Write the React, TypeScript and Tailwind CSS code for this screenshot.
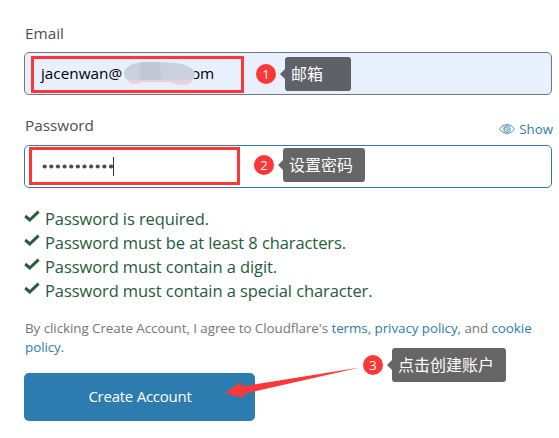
import type { ReactNode } from "react";

const rules = [
  "Password is required.",
  "Password must be at least 8 characters.",
  "Password must contain a digit.",
  "Password must contain a special character.",
];

function Check() {
  return (
    <svg className="mt-[3px] h-[13px] w-4 shrink-0" viewBox="0 0 16 13" fill="none">
      <path d="M1.2 6 5.8 10 14.6 1.7" stroke="#245c3d" strokeWidth="3" />
    </svg>
  );
}

function Eye() {
  return (
    <svg className="h-3 w-4" viewBox="0 0 16 12" fill="none" stroke="#2c7cb0" strokeWidth="0.8">
      <path d="M.5 6C4.5.1 11.5.1 15.5 6 11.5 11.9 4.5 11.9.5 6Z" />
      <circle cx="8" cy="6" r="3.3" />
      <path d="M6.2 7.2A2 2 0 0 1 9.3 4.7M9.8 5.4A2 2 0 0 1 7.2 7.8M7.2 6.6 8.8 5.4" />
    </svg>
  );
}

interface CalloutProps {
  n: number;
  place: string;
  box: string;
  pointer: string;
  children: ReactNode;
}

function Callout({ n, place, box, pointer, children }: CalloutProps) {
  return (
    <div className={`absolute flex items-center ${place}`}>
      <span className="flex size-5 items-center justify-center rounded-full bg-[#fc3737] text-[13px] leading-none text-white">
        {n}
      </span>
      <span className={`ml-[4px] h-0 w-0 border-y-[5px] border-r-[5px] border-y-transparent ${pointer}`} />
      <span className={`flex h-[34px] items-center rounded-[3px] pl-[6px] text-[16px] leading-none text-white ${box}`}>
        {children}
      </span>
    </div>
  );
}

export default function App() {
  return (
    <main className="relative h-[438px] w-[559px] overflow-hidden bg-white pl-6 pr-[7px] font-['Open_Sans','Noto_Sans_CJK_SC',sans-serif] text-[#4a4e54]">
      <div className="flex h-[52px] items-end pb-2 pl-px text-[15.3px] leading-[22px]">Email</div>
      <div className="flex h-[43px] items-center rounded-[5px] border border-[#72767d] bg-[#e8effd] pl-4 text-[15.3px] text-black">
        <span className="w-[82px] whitespace-nowrap">jacenwan@</span>
        <span className="ml-[68px] tracking-[-0.3px]">om</span>
      </div>

      <div className="flex h-[50px] items-end justify-between">
        <span className="pb-[9px] pl-px text-[15.3px] leading-[22px]">Password</span>
        <span className="-mr-px flex items-center gap-1 pb-[6px] text-[13.3px] leading-5 text-[#2c7cb0]">
          <Eye />
          Show
        </span>
      </div>
      <div className="flex h-[43px] items-center rounded-[5px] border border-[#2c7cb0] bg-white pl-[17px]">
        <svg className="h-[5px] w-[71px]" viewBox="0 0 71 5" fill="#4a4e54">
          {Array.from({ length: 11 }, (_, i) => (
            <circle key={i} cx={2.7 + i * 6.63} cy="2.5" r="2.1" />
          ))}
        </svg>
        <span className="h-[19px] w-px bg-[#333]" />
      </div>

      <ul className="pt-[19px] text-[16.5px] leading-6 tracking-[-0.09px] text-[#245c3d]">
        {rules.map((rule) => (
          <li key={rule} className="flex h-6 gap-[5px] whitespace-nowrap">
            <Check />
            <span>{rule}</span>
          </li>
        ))}
      </ul>

      <p className="mt-4 whitespace-nowrap pl-px text-[13.4px] leading-[19px] tracking-[-0.06px] text-[#72767d]">
        By clicking Create Account, I agree to Cloudflare's <a className="text-[#2c7cb0]">terms</a>,{" "}
        <a className="text-[#2c7cb0]">privacy policy</a>, and <a className="text-[#2c7cb0]">cookie</a>
        <br />
        <a className="text-[#2c7cb0]">policy</a>.
      </p>

      <button className="mt-[16px] flex h-12 w-[231px] items-center justify-center rounded-[5px] bg-[#2c7cb0] pb-px pl-px text-[15px] tracking-[-0.25px] text-white">
        Create Account
      </button>

      <svg className="absolute left-[122px] top-[60px] h-[26px] w-[76px]" viewBox="0 0 76 26">
        <path d="M4 18Q7 24 13 24 18 23 21 22H48Q54 25 62 25 70 24 73 17L60 15H10Z" fill="#e9d0da" />
        <path d="M2 13C3 6 12 3 20 2H40L53 3C63 4 73 8 73 14 73 18 68 20 60 20H8C4 20 2 17 2 13Z" fill="#cad0dd" />
        <path d="M18 2.3 38 2 39 20H18Z" fill="#c2c8d6" />
      </svg>

      <div className="absolute left-[31px] top-[56px] h-[37px] w-[213px] border-[3px] border-[#fc3737]" />
      <div className="absolute left-[29px] top-[147px] h-[38px] w-[211px] border-[3px] border-[#fc3737]" />

      <Callout n={1} place="left-[256px] top-[57px]" box="w-[66px] bg-[#5f6168]" pointer="border-r-[#5f6168]">
        邮箱
      </Callout>
      <Callout n={2} place="left-[254px] top-[148px]" box="w-[82px] bg-[#666]" pointer="border-r-[#666]">
        设置密码
      </Callout>
      <Callout n={3} place="left-[363px] top-[348px]" box="w-[114px] bg-[#666]" pointer="border-r-[#666]">
        点击创建账户
      </Callout>

      <svg className="absolute left-[224px] top-[364px] h-[36px] w-[138px]" viewBox="0 0 138 36">
        <path d="M1 29 17 18 18 22.5 136 3.5 19.5 30 19 34Z" fill="#fc3737" />
      </svg>
    </main>
  );
}
